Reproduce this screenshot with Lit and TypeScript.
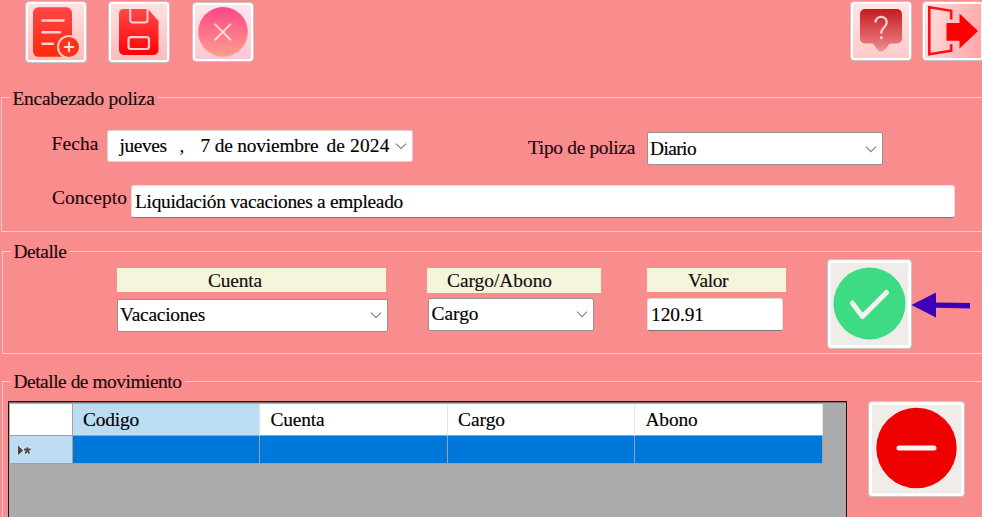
import { LitElement, html, css, svg } from "lit";
import { customElement } from "lit/decorators.js";
import { styleMap } from "lit/directives/style-map.js";

const FONT = '19.4px "Liberation Serif"';
const ctx = document.createElement("canvas").getContext("2d")!;

/** A run of text tracked so that it takes up the given width. */
const run = (text: string, width: number) => {
  ctx.font = FONT;
  const spacing = (width - ctx.measureText(text).width) / text.length;
  return html`<span class="run" style=${styleMap({ letterSpacing: spacing.toFixed(3) + "px" })}>${text}</span>`;
};

const chevron = html`<svg class="chev" width="12" height="8" viewBox="0 0 12 8">
  <path d="M1 1.700L6 6.700L11 1.700" fill="none" stroke="#858585" stroke-width="1.2" />
</svg>`;

const addIcon = svg`
  <defs><linearGradient id="a" x1="0" y1="0" x2="0" y2="1"><stop offset="0" stop-color="#ff4646"/><stop offset="1" stop-color="#ff2a0c"/></linearGradient></defs>
  <rect x="8" y="6.300" width="39" height="49.5" rx="5.5" fill="url(#a)"/>
  <path d="M17.500 19.5H38.500M17.500 31.200H35M17.500 42.700H28" stroke="#ffd2d0" stroke-width="2.4" stroke-linecap="round"/>
  <circle cx="44" cy="46" r="12" fill="#ffc8c8"/>
  <circle cx="44" cy="46" r="10" fill="#ff3218"/>
  <path d="M39.7 46H48.3M44 41.7V50.3" stroke="#ffdcd8" stroke-width="2.2" stroke-linecap="round"/>`;

const saveIcon = svg`
  <defs><linearGradient id="s" x1="0" y1="0" x2="0" y2="1"><stop offset="0" stop-color="#ff4a48"/><stop offset="1" stop-color="#ff0006"/></linearGradient></defs>
  <path d="M15.5 8H40L50.5 20V49a5 5 0 0 1-5 5H16a5 5 0 0 1-5-5V12.500a4.500 4.500 0 0 1 4.500-4.500Z" fill="url(#s)"/>
  <path d="M22.200 8V19a2.500 2.500 0 0 0 2.500 2.500H37a2.500 2.500 0 0 0 2.500-2.500V8" fill="none" stroke="#ffd0d0" stroke-width="2"/>
  <rect x="20.500" y="36.200" width="20.500" height="11.800" rx="2.500" fill="none" stroke="#ffd0d0" stroke-width="2.200"/>`;

const cancelIcon = svg`
  <defs><linearGradient id="c" x1="0" y1="0" x2="0" y2="1"><stop offset="0" stop-color="#fd4688"/><stop offset="1" stop-color="#ff9e8c"/></linearGradient></defs>
  <circle cx="31" cy="29.800" r="24.800" fill="url(#c)"/>
  <path d="M23.200 22.400L38.400 37.700M38.400 22.400L23.200 37.700" stroke="#ffd9dc" stroke-width="2" stroke-linecap="round"/>`;

const helpIcon = svg`
  <defs><linearGradient id="h" x1="0" y1="0" x2="0" y2="1"><stop offset="0" stop-color="#c41b20"/><stop offset=".8" stop-color="#e87377"/><stop offset="1" stop-color="#f29a9c"/></linearGradient></defs>
  <path d="M15 8H47a5 5 0 0 1 5 5V37.500a5 5 0 0 1-5 5H41C38 42.500 35.500 50.800 31 50.800S25 42.500 22 42.500H15a5 5 0 0 1-5-5V13a5 5 0 0 1 5-5Z" fill="url(#h)"/>
  <path d="M25.500 21.500C25.500 14 36.700 14 36.700 21.500C36.700 26.500 31.200 26 31.200 32.500" fill="none" stroke="#fbd5d5" stroke-width="2.200"/>
  <circle cx="31.200" cy="36.800" r="1.500" fill="#fbd5d5"/>`;

const exitIcon = svg`
  <path d="M29.200 18.500V9.800L7.300 6.300V53.300L29.200 49.700V43.200" fill="none" stroke="#fb1018" stroke-width="2.600"/>
  <path d="M24.500 22H37.500V12.500L56 30L37.500 47.500V39.700H24.500Z" fill="#ff0000"/>`;

@customElement("app-root")
export class AppRoot extends LitElement {
  static styles = css`
    :host {
      display: block; width: 982px; height: 517px; overflow: hidden; box-sizing: border-box;
      background: #f98c8c; color: #160a0c;
      font: 19.4px/22px "Liberation Serif", "Times New Roman", serif;
    }
    * { box-sizing: border-box; }
    svg { display: block; flex: none; }
    .run { white-space: pre; -webkit-text-stroke: 0.15px currentColor; }
    .toolbar { display: flex; align-items: flex-start; width: 984px; height: 87px; padding: 1px 0 0 25px; }
    .tool, .act { flex: none; padding: 0; border: 1px solid #c9c5c6; border-radius: 4px; overflow: hidden; box-shadow: inset 0 0 0 2px #fff; }
    .tool { width: 62px; height: 62px; background: linear-gradient(#ffe2e2, #ffb9b9); }
    .tool svg { margin: -1px; }
    .save { margin-left: 21px; }
    .cancel { margin: 1px 0 0 22px; height: 60px; background: linear-gradient(#ffe8ec, #ffc6d0); }
    .help { margin-left: auto; height: 60px; background: linear-gradient(#ffe6e6, #ffc8c8); }
    .exit { margin-left: 10px; height: 60px; background: linear-gradient(100deg, #ffe4e4, #ffa0a0); }
    fieldset { width: 990px; margin: 0 0 9px 1px; padding: 0; border: 1px solid #e8ced0; min-width: 0; }
    legend { height: 21px; line-height: 21px; margin-left: 7.500px; padding: 0 3px; }
    .g1 { height: 145px; }
    .g1 legend { line-height: 23px; }
    .g2 { height: 113px; margin-left: 2px; margin-bottom: 17px; }
    .g3 { height: 160px; margin-left: 2px; }
    .line { display: flex; align-items: flex-start; }
    .box { display: flex; align-items: center; flex: none; background: #fff; border: 1px solid #9b8f90; border-radius: 2px; color: #000; }
    .box .chev { margin-left: auto; margin-right: 5px; }
    .text { border-color: #e6dadb; border-bottom-color: #7c7678; border-radius: 3px; }
    .date { width: 306px; height: 32px; margin: 22px 0 0 8px; padding-left: 12px; border-color: #dccfd0; }
    .comma { width: 5px; margin: 0 16px 0 13px; }
    .rest { margin-left: 8px; }
    .lf { margin: 25px 0 0 49.500px; }
    .lt { margin: 29px 0 0 115.500px; }
    .kind { width: 236px; height: 33px; margin: 24px 0 0 12px; padding-left: 2px; }
    .l2 { margin-top: 20px; }
    .lc { margin: 2px 0 0 50px; }
    .concept { width: 824px; height: 33px; margin-left: 4px; padding-left: 3px; }
    .g2 .line { padding-left: 114px; }
    .col { display: flex; flex-direction: column; flex: none; align-items: flex-start; padding-top: 6px; }
    .cap { height: 24px; line-height: 25px; background: #f5f5dc; border: 0; flex: none; }
    .c1 { width: 271px; } .c1 .cap { width: 269px; padding-left: 91px; }
    .c1 .box { width: 271px; height: 33px; margin-top: 6.500px; padding-left: 2px; }
    .c2 { width: 174px; margin-left: 39px; } .c2 .cap { width: 174px; padding-left: 20px; height: 25px; }
    .c2 .box { width: 166px; height: 33px; margin: 4.500px 0 0 1px; padding-left: 2.500px; }
    .c3 { width: 139px; margin-left: 46px; } .c3 .cap { width: 139px; padding-left: 41px; }
    .c3 .box { width: 136px; height: 33px; margin-top: 6px; padding-left: 3px; }
    .act { background: #efecea; box-shadow: inset 0 0 0 3px #fff; }
    .act svg { margin: -1px; }
    .ok { width: 85px; height: 90px; margin: -3px 0 0 41px; }
    .arrow { margin: 30px 0 0 -1.500px; position: relative; }
    .g3 .line { padding-left: 5px; margin-top: 9px; }
    .table { width: 839px; height: 130px; flex: none; background: #ababab; border: 1px solid #181414; box-shadow: inset 0 1px #777; padding: 2px 0 0 1px; }
    .row { display: grid; grid-template-columns: 62.500px 187.500px 187.500px 187.500px 187.500px; width: 813px; }
    .row > div { border-right: 1px solid #a0a0a0; border-bottom: 1px solid #a0a0a0; }
    .head > div { height: 32px; line-height: 31px; padding-left: 10.500px; background: #fff; border-right-color: #e4e4e4; color: #000; }
    .head > .corner { border-right-color: #a0a0a0; }
    .head > .sel { background: #bcdcf3; border-right-color: #d5e6f3; }
    .data > div { height: 28px; background: #0078d9; }
    .data > .rowhead { background: #bcdcf3; }
    .minus { width: 97px; height: 96px; margin-left: 20.500px; }
  `;

  render() {
    return html`
      <div class="toolbar">
        <button class="tool"><svg width="62" height="62">${addIcon}</svg></button>
        <button class="tool save"><svg width="62" height="62">${saveIcon}</svg></button>
        <button class="tool cancel"><svg width="62" height="60">${cancelIcon}</svg></button>
        <button class="tool help"><svg width="62" height="60">${helpIcon}</svg></button>
        <button class="tool exit"><svg width="62" height="60">${exitIcon}</svg></button>
      </div>
      <fieldset class="g1">
        <legend>${run("Encabezado poliza", 142)}</legend>
        <div class="line">
          <div class="lf">${run("Fecha", 47)}</div>
          <div class="box date">
            ${run("jueves", 47)}<span class="comma">,</span>${run("7 de noviembre", 118)}<span class="rest">${run("de 2024", 63)}</span>${chevron}
          </div>
          <div class="lt">${run("Tipo de poliza", 107)}</div>
          <div class="box kind">${run("Diario", 46)}${chevron}</div>
        </div>
        <div class="line l2">
          <div class="lc">${run("Concepto", 75)}</div>
          <div class="box text concept">${run("Liquidación vacaciones a empleado", 268)}</div>
        </div>
      </fieldset>
      <fieldset class="g2">
        <legend>${run("Detalle", 53)}</legend>
        <div class="line">
          <div class="col c1">
            <div class="cap">${run("Cuenta", 54)}</div>
            <div class="box">${run("Vacaciones", 85)}${chevron}</div>
          </div>
          <div class="col c2">
            <div class="cap">${run("Cargo/Abono", 105)}</div>
            <div class="box">${run("Cargo", 47)}${chevron}</div>
          </div>
          <div class="col c3">
            <div class="cap">${run("Valor", 40)}</div>
            <div class="box text">${run("120.91", 53)}</div>
          </div>
          <button class="act ok">
            <svg width="85" height="90">
              <circle cx="42.500" cy="44.500" r="36" fill="#3ddc84" />
              <path d="M25.300 44L35.500 57.500L59.500 33.500" fill="none" stroke="#f3f1ee" stroke-width="5" stroke-linecap="round" stroke-linejoin="round" />
            </svg>
          </button>
          <svg class="arrow" width="60" height="26">
            <path d="M.500 13L25 .500V10.500L59 11V16.500L25 15.800V25.500Z" fill="#3d00b8" />
          </svg>
        </div>
      </fieldset>
      <fieldset class="g3">
        <legend>${run("Detalle de movimiento", 168)}</legend>
        <div class="line">
          <div class="table">
            <div class="row head">
              <div class="corner"></div>
              <div class="sel">${run("Codigo", 56)}</div>
              <div>${run("Cuenta", 54)}</div>
              <div>${run("Cargo", 47)}</div>
              <div>${run("Abono", 52)}</div>
            </div>
            <div class="row data">
              <div class="rowhead">
                <svg width="32" height="27">
                  <path d="M7.500 8.500V20L13.500 14.500Z" fill="#444" stroke="#eee" stroke-width=".8" />
                  <circle cx="17.300" cy="14.500" r="4" fill="#e4e4e4" />
                  <path d="M17.300 11.200V14.500M14 13.500L20.600 13.500M15.200 17.500L17.300 14L19.400 17.500" fill="none" stroke="#4c4c4c" stroke-width="1.800" />
                </svg>
              </div>
              <div></div><div></div><div></div><div></div>
            </div>
          </div>
          <button class="act minus">
            <svg width="97" height="96">
              <circle cx="48.500" cy="47" r="40.200" fill="#ef0000" />
              <path d="M31 47H66" stroke="#fff3f1" stroke-width="5" stroke-linecap="round" />
            </svg>
          </button>
        </div>
      </fieldset>
    `;
  }
}
